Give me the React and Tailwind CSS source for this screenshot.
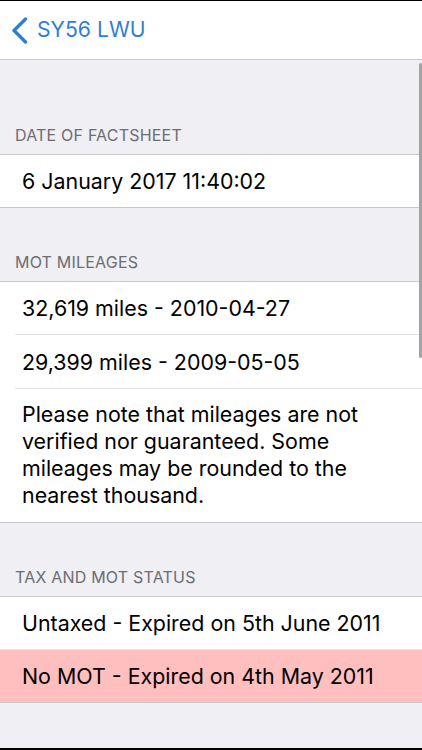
function Header({ children, top }) {
  return (
    <div className={`${top} pb-[10px] px-[15px] text-[16px] leading-[18px] text-[#6d6d72] uppercase tracking-[0.2px]`}>
      {children}
    </div>
  );
}

function Cell({ children, className = "", inset = false }) {
  return (
    <div className={`relative flex items-center h-[52px] px-[22px] text-[21.4px] text-black ${className}`}>
      {children}
      {inset && <div className="absolute bottom-0 left-[15px] right-0 h-px bg-[#e0e0e3]" />}
    </div>
  );
}

export default function App() {
  return (
    <div
      className="relative h-[750px] w-[422px] overflow-hidden bg-[#efeff4] border-t border-b-2 border-black flex flex-col"
      style={{ fontFamily: "Inter, 'Noto Sans', sans-serif" }}
    >
      <div className="h-[59px] shrink-0 bg-white border-b border-[#c8c7cc] flex items-center pl-[11px] gap-[9px]">
        <svg width="17" height="27" viewBox="0 0 17 27" fill="none">
          <path d="M14.5 2 L3 13.5 L14.5 25" stroke="#2f7fd0" strokeWidth="3.4" strokeLinecap="round" strokeLinejoin="round" />
        </svg>
        <span className="text-[21.2px] text-[#2f7fd0] leading-none">SY56 LWU</span>
      </div>

      <Header top="pt-[66px]">Date of Factsheet</Header>
      <div className="bg-white border-y border-[#c8c7cc]">
        <Cell className="h-[52px]">6 January 2017 11:40:02</Cell>
      </div>

      <Header top="pt-[45px]">MOT Mileages</Header>
      <div className="bg-white border-y border-[#c8c7cc]">
        <Cell inset className="h-[53px]">32,619 miles - 2010-04-27</Cell>
        <Cell inset className="h-[54px]">29,399 miles - 2009-05-05</Cell>
        <div className="px-[22px] pt-[12px] pb-[13px] text-[21.4px] leading-[27px] text-black">
          Please note that mileages are not verified nor guaranteed. Some mileages may be rounded to the nearest thousand.
        </div>
      </div>

      <Header top="pt-[45px]">Tax and MOT Status</Header>
      <div className="border-y border-[#c8c7cc]">
        <Cell className="bg-white border-b border-[#e6e6e9] h-[53px]">Untaxed - Expired on 5th June 2011</Cell>
        <Cell className="bg-[#ffbfbf]">No MOT - Expired on 4th May 2011</Cell>
      </div>

      <div className="absolute right-0 top-[62px] w-[3px] h-[295px] rounded-full bg-[#a3a3a6]" />
    </div>
  );
}
